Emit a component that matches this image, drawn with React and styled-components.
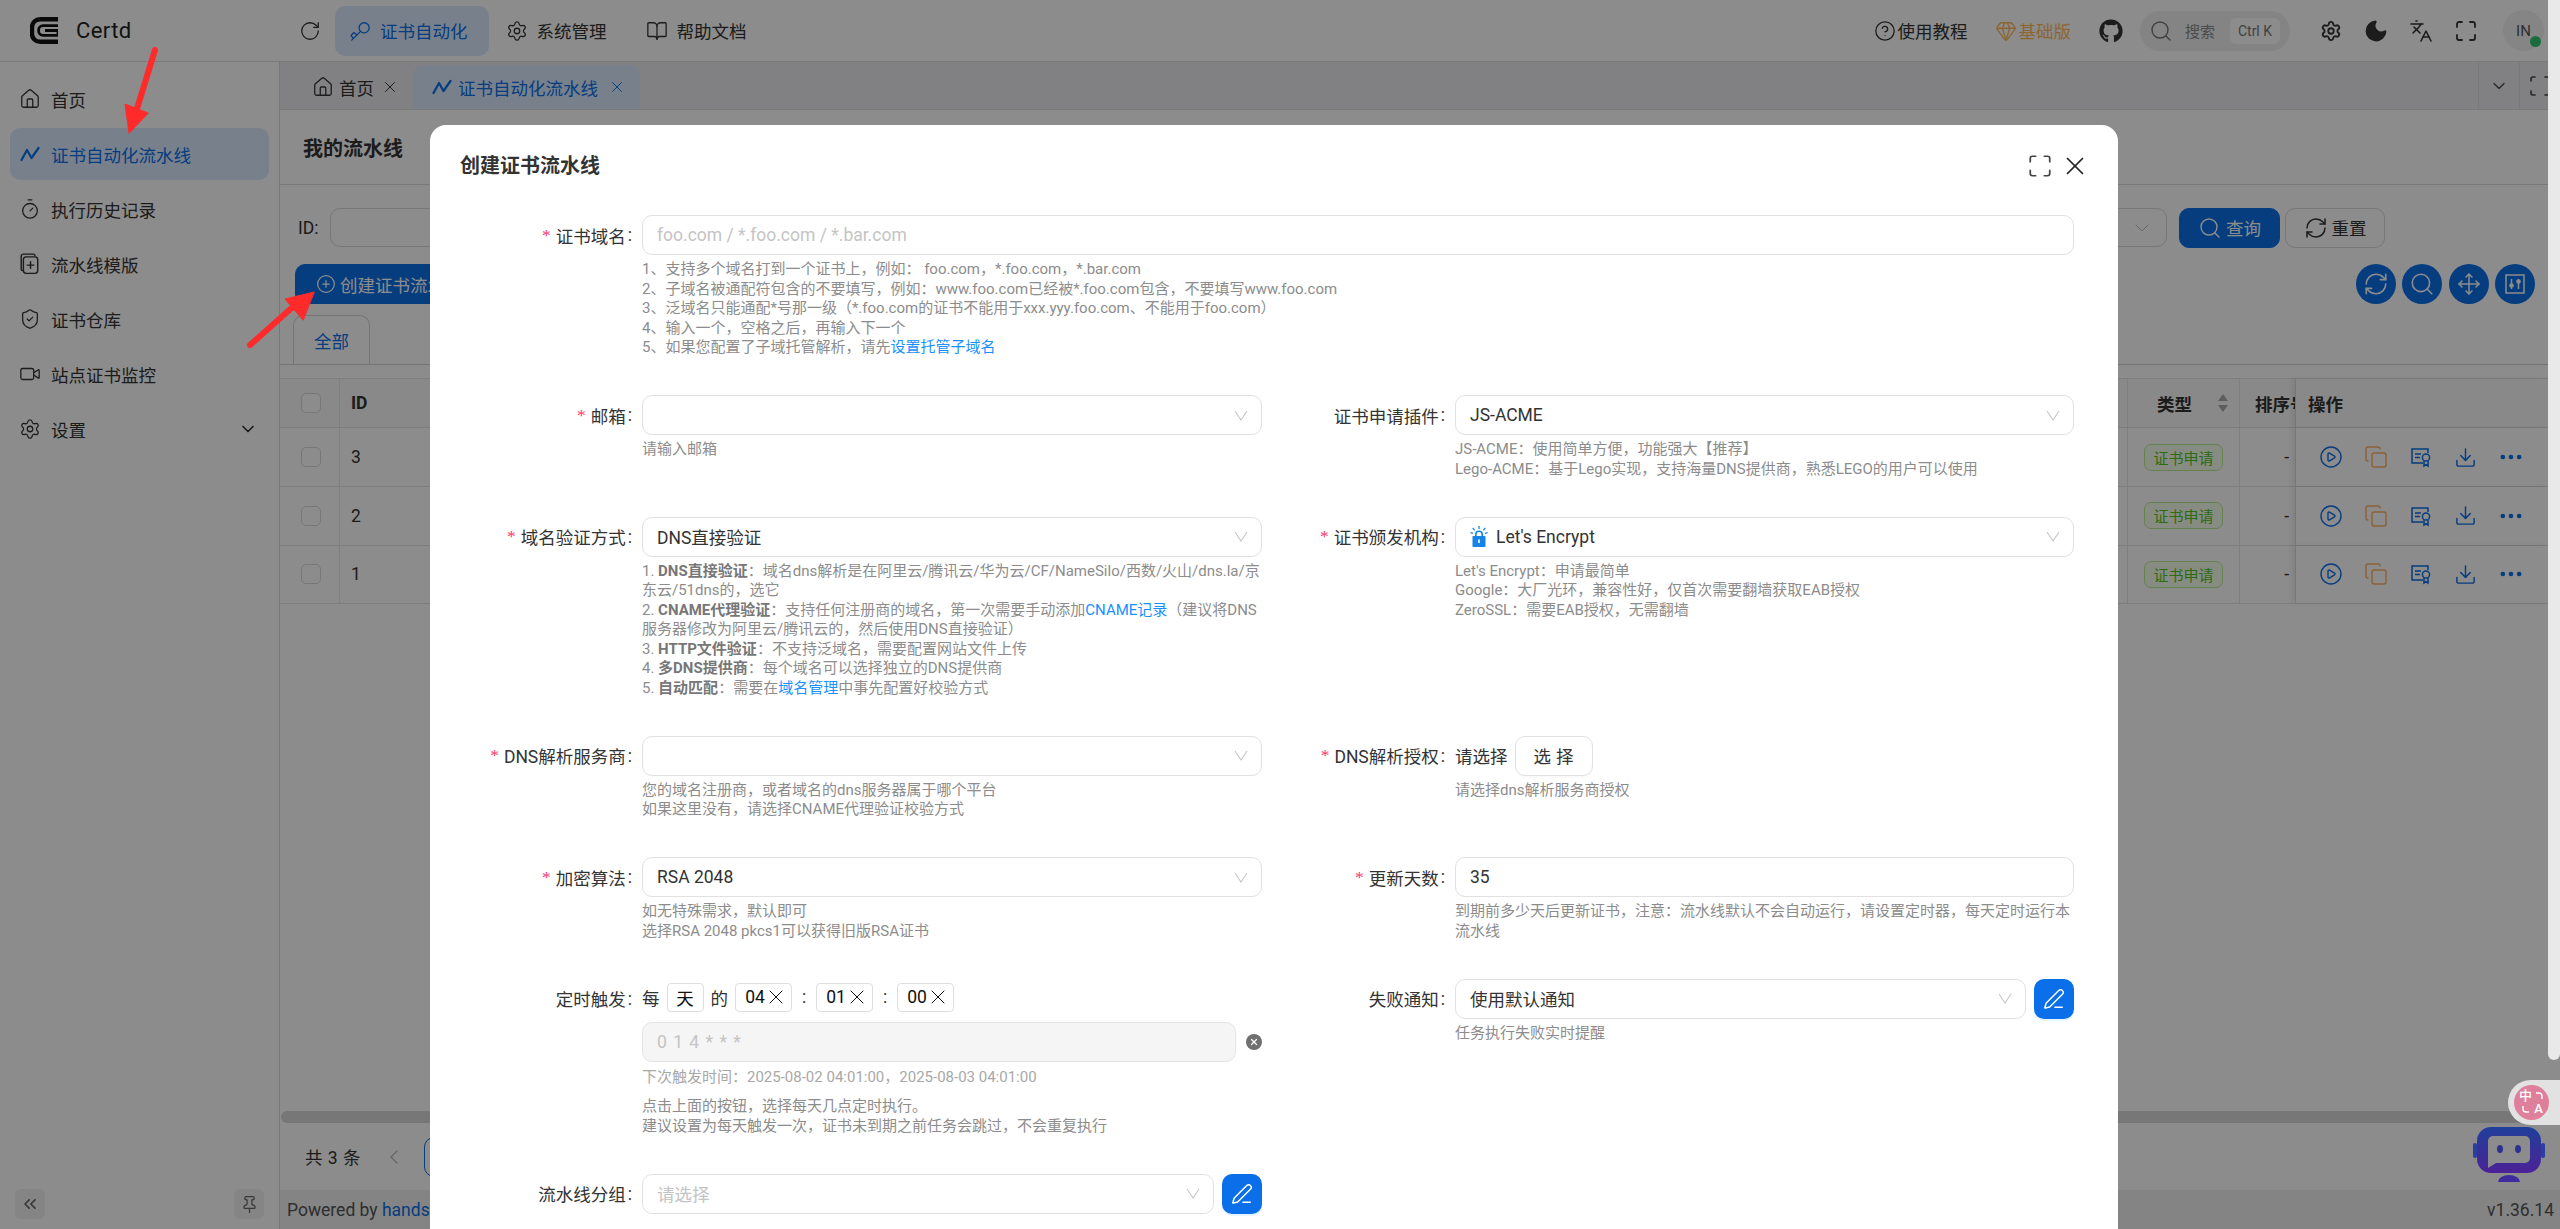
import React from "react";
import styled, { createGlobalStyle } from "styled-components";
import {
  House, Key, Settings, BookOpen, RotateCw, ShieldCheck, Video, ChevronDown, CircleHelp, Gem, Search,
  Moon, Languages, Maximize, X, CirclePlus, RefreshCw, Move, CirclePlay, Copy, Download, Ellipsis,
  PenLine, ChevronsLeft, Pin, Timer, ChevronLeft, Scan,
} from "lucide-react";
import { FaGithub } from "react-icons/fa";

const PRIMARY = "#0a6fe8";

const Global = createGlobalStyle`
  html, body { margin: 0; padding: 0; width: 2560px; height: 1229px; overflow: hidden; background: #fff; }
  body { font-family: Roboto, "Noto Sans CJK SC", sans-serif; font-size: 17.5px; color: #333; }
  * { box-sizing: border-box; }
`;

const Shell = styled.div`
  width: 2560px; height: 1229px; display: flex; flex-direction: column; overflow: hidden; position: relative; background: #fff;
`;
const TopBar = styled.header`
  height: 62px; flex: none; display: flex; align-items: center; padding-right: 16px; border-bottom: 1px solid #dcdcdc; background: #fff;
`;
const Brand = styled.div`
  width: 300px; padding-left: 30px; display: flex; align-items: center; gap: 18px; font-size: 22px; letter-spacing: .4px; color: #222;
`;
const MenuItem = styled.div`
  height: 50px; display: flex; align-items: center; gap: 10px; padding: 0 21px 0 15px; border-radius: 10px; margin-left: ${p => p.$ml || 0}px;
  color: ${p => (p.$active ? PRIMARY : "#333")}; background: ${p => (p.$active ? "#dbeaff" : "transparent")}; white-space: nowrap;
  svg { margin: 0 -1px; }
`;
const Reload = styled.div`
  width: 20px; display: flex; justify-content: center; margin-right: 15px; color: #333; svg { flex: none; }
`;
const TurnedKey = styled(Key)` transform: rotate(180deg); `;
const HeaderRight = styled.div`
  margin-left: auto; display: flex; align-items: center;
`;
const HeaderLink = styled.div`
  display: flex; align-items: center; gap: 4px; margin-left: ${p => p.$ml || 0}px; color: ${p => p.$color || "#333"}; white-space: nowrap;
  svg { margin: 0 -2px; }
`;
const SearchPill = styled.div`
  width: 150px; height: 40px; margin-left: 19px; border-radius: 20px; background: #f1f1f1; display: flex; align-items: center; padding: 0 10px 0 9px; color: #777; font-size: 15px;
`;
const SearchWord = styled.span` margin-left: 12px; color: #888; `;
const Kbd = styled.span`
  margin-left: auto; width: 50px; height: 26px; border-radius: 6px; background: #fff; font-size: 14px; display: flex; align-items: center; justify-content: center; color: #777;
`;
const HeaderIcon = styled.div`
  width: 45px; display: flex; justify-content: center; color: #333; margin-left: ${p => p.$ml || 0}px;
`;
const Avatar = styled.div`
  width: 41px; height: 41px; border-radius: 50%; background: #f2f2f2; margin-left: 15px; position: relative; display: flex; align-items: center; justify-content: center; font-size: 15px; color: #555;
`;
const OnlineDot = styled.span`
  position: absolute; right: 3px; bottom: 4px; width: 11px; height: 11px; border-radius: 50%; background: #2fc76e;
`;

const Body = styled.div` flex: 1; min-height: 0; display: flex; `;
const Sidebar = styled.aside`
  width: 280px; flex: none; border-right: 1px solid #dcdcdc; padding: 11px 10px 10px; display: flex; flex-direction: column; gap: 3px;
`;
const NavItem = styled.div`
  height: 52px; flex: none; border-radius: 10px; display: flex; align-items: center; gap: 11px; padding: 0 11px 0 10px;
  color: ${p => (p.$active ? PRIMARY : "#333")}; background: ${p => (p.$active ? "#dbeaff" : "transparent")};
  & > svg { margin: 0 -1px; }
`;
const NavTail = styled.span` margin-left: auto; display: flex; `;
const SideFoot = styled.div` margin-top: auto; padding: 0 5px; display: flex; justify-content: space-between; `;
const SquareBtn = styled.div`
  width: 30px; height: 30px; border-radius: 6px; background: #f3f3f3; display: flex; align-items: center; justify-content: center; color: #666;
`;

const Main = styled.main` flex: 1; min-width: 0; display: flex; flex-direction: column; `;
const TabBar = styled.div`
  height: 48px; flex: none; background: #ebecef; border-bottom: 1px solid #dcdcdc; display: flex; align-items: flex-end; padding-left: 23px; position: relative;
`;
const PageTab = styled.div`
  height: 44px; display: flex; align-items: center; gap: 6px; padding: 0 14px 0 ${p => (p.$active ? 19 : 10)}px; border-radius: 10px 10px 0 0; width: ${p => p.$w}px;
  background: ${p => (p.$active ? "#dbeaff" : "transparent")}; color: ${p => (p.$active ? PRIMARY : "#333")};
  & > svg { margin: 0 -1px; }
`;
const TabClose = styled.span` margin-left: auto; display: flex; `;
const TabTool = styled.div`
  width: 41px; height: 47px; border-left: 1px solid #dcdcdc; display: flex; align-items: center; justify-content: center; color: #444; flex: none;
`;
const TabTools = styled.div` margin-left: auto; display: flex; padding-right: 0; `;
const PageHead = styled.div`
  height: 75px; flex: none; display: flex; align-items: center; padding-left: 23px; font-size: 20px; font-weight: 700; color: #333; border-bottom: 1px solid #dcdcdc;
`;
const Content = styled.div` flex: 1; min-height: 0; display: flex; flex-direction: column; `;
const QueryRow = styled.div`
  height: 39px; margin-top: 23px; padding: 0 175px 0 18px; display: flex; align-items: center; flex: none;
`;
const FieldLabel = styled.span` margin-right: 12px; `;
const QueryInput = styled.div`
  flex: 1; height: 39px; border: 1px solid #d9d9d9; border-radius: 10px; display: flex; align-items: center; justify-content: flex-end; padding-right: 12px; color: #bbb;
`;
const Btn = styled.div`
  height: 40px; padding: 0 ${p => (p.$w ? 0 : 20)}px; border-radius: 10px; display: flex; align-items: center; justify-content: center; gap: 4px; margin-left: ${p => p.$ml}px; white-space: nowrap; flex: none;
  width: ${p => (p.$w ? `${p.$w}px` : "auto")};
  background: ${p => (p.$primary ? PRIMARY : "#fff")}; color: ${p => (p.$primary ? "#fff" : "#333")}; border: 1px solid ${p => (p.$primary ? PRIMARY : "#d9d9d9")};
  svg { flex: none; }
`;
const ToolRow = styled.div`
  height: 40px; margin-top: 17px; padding: 0 25px 0 15px; display: flex; justify-content: space-between; align-items: center; flex: none;
`;
const Circles = styled.div` display: flex; gap: 6.5px; `;
const Circle = styled.div`
  width: 40px; height: 40px; border-radius: 50%; background: ${PRIMARY}; color: #fff; display: flex; align-items: center; justify-content: center;
`;
const TypeTabs = styled.div`
  height: 49px; margin: 12px 12px 0 0; padding-left: 13px; border-bottom: 1px solid #d6d6d6; flex: none; display: flex; align-items: flex-end;
`;
const TypeTab = styled.div`
  width: 77px; height: 49px; border: 1px solid #d6d6d6; border-bottom: 0; border-radius: 10px 10px 0 0; display: flex; align-items: center; justify-content: center; color: ${PRIMARY};
`;
const Table = styled.div`
  margin: 13px 12px 0 0; border-top: 1px solid #e3e3e3; flex: 1; min-height: 0; display: flex; flex-direction: column;
`;
const TRow = styled.div`
  display: grid; grid-template-columns: 60px 1fr 112px 56px 252px; height: ${p => p.$h}px; flex: none; border-bottom: 1px solid #e3e3e3; background: ${p => (p.$head ? "#fafafa" : "#fff")}; font-weight: ${p => (p.$head ? 700 : 400)};
`;
const Cell = styled.div`
  border-right: 1px solid #e8e8e8; display: flex; align-items: center; padding: 0 ${p => p.$pr ?? 10}px 0 ${p => p.$pl ?? 11}px; justify-content: ${p => p.$justify || "flex-start"}; overflow: hidden; white-space: nowrap; min-width: 0;
`;
const FixedCell = styled.div`
  display: flex; align-items: center; padding-left: 12px; box-shadow: -4px 0 5px rgba(0,0,0,.08); position: relative; background: ${p => (p.$head ? "#fafafa" : "#fff")};
`;
const Check = styled.span`
  width: 20px; height: 20px; border: 1px solid #d9d9d9; border-radius: 5px; background: #fff; display: block; flex: none;
`;
const TypeTag = styled.span`
  width: 79px; height: 27px; border-radius: 7px; border: 1px solid #b7eb8f; background: #f6ffed; color: #52c41a; font-size: 15px; display: flex; align-items: center; justify-content: center; flex: none;
`;
const SortArrows = styled.span` margin-left: auto; display: flex; color: #aaa; `;
const Actions = styled.div` display: grid; grid-template-columns: repeat(5, 45px); width: 100%; justify-items: center; align-items: center; margin-left: -12px; padding-left: 12px; `;
const ActionIcon = styled.span` display: flex; color: ${p => (p.$warm ? "#ffb060" : PRIMARY)}; `;
const TableSpacer = styled.div` flex: 1; `;
const HScroll = styled.div` height: 12px; margin: 0 -12px 0 1px; border-radius: 6px; background: #d9d9d9; flex: none; `;
const Pager = styled.div`
  height: 67px; flex: none; padding-left: 25px; display: flex; align-items: center; letter-spacing: .5px; color: #333;
`;
const PagerPrev = styled.span` display: flex; margin-left: 21px; color: #bbb; `;
const PagerNum = styled.span`
  margin-left: 18px; width: 40px; height: 40px; border: 1px solid ${PRIMARY}; border-radius: 10px; display: flex; align-items: center; justify-content: center; color: ${PRIMARY}; flex: none;
`;
const Footer = styled.footer`
  height: 39px; flex: none; background: #f0f0f0; padding: 0 6px 0 7px; display: flex; align-items: center; justify-content: space-between; color: #555;
`;
const FooterLink = styled.a` color: ${PRIMARY}; `;

/* modal layer */
const Mask = styled.div`
  position: absolute; inset: 0; background: rgba(0,0,0,.45); padding: 125px 0 0 430px; overflow: hidden;
`;
const Modal = styled.section`
  width: 1688px; height: 1200px; background: #fff; border-radius: 16px;
`;
const ModalHead = styled.div`
  height: 81px; padding: 0 28px 0 30px; display: flex; align-items: center; justify-content: space-between;
`;
const ModalTitle = styled.h2` margin: 0; font-size: 20px; font-weight: 700; color: #333; line-height: 1; `;
const ModalTools = styled.div` display: flex; align-items: center; gap: 7px; color: #222; `;
const Form = styled.div`
  margin-top: 9px; padding-left: 20px; display: grid; grid-template-columns: 812px 794px; column-gap: 18px; row-gap: 37.5px; align-items: start;
`;
const Item = styled.div`
  display: grid; grid-template-columns: ${p => p.$label}px 1fr; grid-column: ${p => (p.$wide ? "1 / -1" : "auto")};
`;
const Label = styled.label`
  height: 40px; display: flex; align-items: center; justify-content: flex-end; color: #333; white-space: nowrap;
  &::after { content: ":"; margin: 0 10px 0 2px; }
`;
const Star = styled.span`
  color: #f4386c; margin-right: 5px; font-family: "Liberation Serif", serif;
`;
const Control = styled.div` min-width: 0; `;
const Combo = styled.div` display: flex; gap: 8px; `;
const Field = styled.div`
  flex: 1; min-width: 0; height: 40px; border: 1px solid ${p => (p.$disabled ? "#e4e4e4" : "#e1e1e1")}; border-radius: 10px; padding: 0 14px;
  background: ${p => (p.$disabled ? "#f5f5f5" : "#fff")}; display: flex; align-items: center; justify-content: space-between; color: ${p => (p.$muted ? "#c4c4c4" : "#333")}; white-space: nowrap; word-spacing: ${p => (p.$disabled ? "2px" : 0)};
`;
const FieldText = styled.span` display: flex; align-items: center; gap: 8px; `;
const Chevron = styled.svg` display: block; flex: none; margin-right: -1px; color: #c6c6c6; `;
const EditBtn = styled.div`
  width: 40px; height: 40px; flex: none; border-radius: 10px; background: ${PRIMARY}; color: #fff; display: flex; align-items: center; justify-content: center; box-shadow: 0 2px 0 rgba(5,145,255,.1);
`;
const Help = styled.div`
  margin-top: ${p => p.$mt ?? 5}px; font-size: 15px; line-height: 19.5px; color: ${p => p.$color || "#8c8c8c"};
  strong { color: #777; font-weight: 700; }
  a { color: #1890ff; text-decoration: none; }
`;
const Line = styled.div``;
const PickRow = styled.div` height: 40px; display: flex; align-items: center; gap: 7px; `;
const PickBtn = styled.div`
  width: 78px; height: 40px; border: 1px solid #e1e1e1; border-radius: 10px; display: flex; align-items: center; justify-content: center; letter-spacing: 5px; padding-left: 5px; box-shadow: 0 2px 0 rgba(0,0,0,.02);
`;
const CronRow = styled.div` height: 29px; margin-top: 4px; display: flex; align-items: center; gap: 7px; white-space: nowrap; `;
const CronTag = styled.span`
  height: 29px; width: ${p => p.$w}px; border: 1px solid #dedede; border-radius: 4px; display: flex; align-items: center; justify-content: center; gap: 2px; color: #111;
`;
const CronX = styled(X)` margin: 0 -6px 0 -3px; flex: none; `;
const CronColon = styled.span` width: 12px; text-align: center; margin: 0 -1px; `;
const CronField = styled.div` margin-top: 10px; display: flex; align-items: center; `;
const ClearDot = styled.span`
  width: 16px; height: 16px; margin-left: 10px; border-radius: 50%; background: #707070; color: #fff; display: flex; align-items: center; justify-content: center; flex: none;
`;

const ScrollThumb = styled.div`
  position: absolute; right: 0; top: 0; width: 12px; height: 1060px; background: #e9e9e9; border-radius: 0 0 6px 6px;
`;
const Translator = styled.div`
  position: absolute; right: 0; top: 1080px; width: 52px; height: 45px; background: #e2e2e2; border-radius: 23px 0 0 23px; display: flex; align-items: center; padding-left: 6px;
`;
const TransDisc = styled.div`
  width: 35px; height: 35px; border-radius: 50%; background: #de7f9c; color: #fff; display: grid; grid-template-columns: 1fr 1fr; grid-template-rows: 1fr 1fr; font-size: 13px; line-height: 1; padding: 4px 4px 5px 5px; font-weight: 500;
`;
const TransWord = styled.span` display: flex; align-items: center; justify-content: center; grid-column: ${p => p.$c}; grid-row: ${p => p.$r}; `;
const TransArc = styled.svg` display: block; grid-column: ${p => p.$c}; grid-row: ${p => p.$r}; place-self: center; `;
const Robot = styled.svg` position: absolute; left: 2472px; top: 1126px; `;
const Arrows = styled.svg` position: absolute; left: 0; top: 0; pointer-events: none; `;
const Logo = styled.svg` flex: none; `;

const ico = { size: 22, strokeWidth: 1.4 };

const Zigzag = ({ size = 22 }) => (
  <svg width={size} height={size} viewBox="0 0 22 22" fill="none" stroke="currentColor" strokeWidth="2.2" strokeLinejoin="round" strokeLinecap="round">
    <path d="M2.5 17 L8 7 L12.5 15 L19.5 5" />
  </svg>
);
const TemplateIcon = () => (
  <svg width="22" height="22" viewBox="0 0 20 20" fill="none" stroke="currentColor" strokeWidth="1.3" strokeLinecap="round" strokeLinejoin="round">
    <rect x="4" y="3.5" width="13" height="15" rx="2.5" />
    <path d="M4 16 H3 a1 1 0 0 1 -1 -1 V3 a2 2 0 0 1 2 -2 H13 a1.5 1.5 0 0 1 1.5 1.5 M10.5 8 V14 M7.5 11 H13.5" />
  </svg>
);
const CertIcon = () => (
  <svg width="22" height="22" viewBox="0 0 22 22" fill="none" stroke="currentColor" strokeWidth="1.5">
    <path d="M13 17 H2 V3 H18 V7" />
    <path d="M5 8 H11 M5 11.5 H10" />
    <circle cx="16" cy="11.5" r="3.6" />
    <path d="M14 15 V20 L16 18.6 L18 20 V15" />
  </svg>
);
const TuneBox = () => (
  <svg width="24" height="24" viewBox="0 0 24 24" fill="none" stroke="currentColor" strokeWidth="1.5">
    <rect x="3" y="3" width="18" height="18" />
    <path d="M8.5 7 V17 M15.5 7 V17" />
    <circle cx="8.5" cy="13.5" r="1.6" fill="currentColor" />
    <circle cx="15.5" cy="9.5" r="1.6" fill="currentColor" />
  </svg>
);
const LeIcon = () => (
  <svg width="18" height="21" viewBox="0 0 18 21" fill="none">
    <path d="M9 0 V3 M2.8 1.8 L4.6 4.4 M15.2 1.8 L13.4 4.4 M0.5 6.6 L3 7.4 M17.5 6.6 L15 7.4" stroke="#1584e8" strokeWidth="1.3" />
    <path d="M5.8 10 V8.4 a3.2 3.2 0 0 1 6.4 0 V10" stroke="#1584e8" strokeWidth="1.6" />
    <rect x="2.5" y="10" width="13" height="11" rx="0.8" fill="#1584e8" />
    <rect x="8.2" y="13.5" width="1.6" height="3.5" fill="#fff" />
  </svg>
);
const SortIcon = () => (
  <svg width="12" height="22" viewBox="0 0 12 22" fill="currentColor">
    <path d="M6 2 L11 9 H1 Z M6 20 L1 13 H11 Z" />
  </svg>
);

const Req = () => <Star>*</Star>;
const Caret = () => (
  <Chevron width="14" height="11" viewBox="0 0 14 11" fill="none" stroke="currentColor" strokeWidth="1.1">
    <path d="M1 1 L7 10 L13 1" />
  </Chevron>
);
const Edit = () => <EditBtn><PenLine size={22} strokeWidth={1.6} /></EditBtn>;

const NAV = [
  [<House {...ico} key="i" />, "首页"],
  [<Zigzag key="i" />, "证书自动化流水线", true],
  [<Timer {...ico} key="i" />, "执行历史记录"],
  [<TemplateIcon key="i" />, "流水线模版"],
  [<ShieldCheck {...ico} key="i" />, "证书仓库"],
  [<Video {...ico} key="i" />, "站点证书监控"],
];

const ROWS = ["3", "2", "1"];

export default function App() {
  return (
    <Shell>
      <Global />
      <TopBar>
        <Brand>
          <Logo width="28" height="27" viewBox="0 0 28 27" fill="none" stroke="#111" strokeLinejoin="round">
            <path d="M28 2.2 H10 a8 8 0 0 0 -8 8 V16.8 a8 8 0 0 0 8 8 H28" strokeWidth="4.4" />
            <path d="M28 8.6 H13 a4.4 4.4 0 0 0 -4.4 4.4 V14 a4.4 4.4 0 0 0 4.4 4.4 H28 V13.5 H15" strokeWidth="2.8" />
          </Logo>
          Certd
        </Brand>
        <Reload><RotateCw size={22} strokeWidth={1.4} /></Reload>
        <MenuItem $active><TurnedKey {...ico} />证书自动化</MenuItem>
        <MenuItem $ml={3}><Settings {...ico} />系统管理</MenuItem>
        <MenuItem $ml={4}><BookOpen {...ico} />帮助文档</MenuItem>
        <HeaderRight>
          <HeaderLink><CircleHelp {...ico} />使用教程</HeaderLink>
          <HeaderLink $ml={29} $color="#ffb95c"><Gem size={22} strokeWidth={1.5} />基础版</HeaderLink>
          <HeaderLink $ml={30}><FaGithub size={24} /></HeaderLink>
          <SearchPill>
            <Search size={24} strokeWidth={1.4} />
            <SearchWord>搜索</SearchWord>
            <Kbd>Ctrl K</Kbd>
          </SearchPill>
          <HeaderIcon $ml={18}><Settings size={22} strokeWidth={2} /></HeaderIcon>
          <HeaderIcon><Moon size={26} fill="currentColor" strokeWidth={1.2} /></HeaderIcon>
          <HeaderIcon><Languages size={24} strokeWidth={1.6} /></HeaderIcon>
          <HeaderIcon><Maximize size={24} strokeWidth={1.8} /></HeaderIcon>
          <Avatar>IN<OnlineDot /></Avatar>
        </HeaderRight>
      </TopBar>
      <Body>
        <Sidebar>
          {NAV.map(([icon, text, active]) => (
            <NavItem key={text} $active={active}>{icon}{text}</NavItem>
          ))}
          <NavItem>
            <Settings {...ico} />设置
            <NavTail><ChevronDown size={20} strokeWidth={2} /></NavTail>
          </NavItem>
          <SideFoot>
            <SquareBtn><ChevronsLeft size={20} /></SquareBtn>
            <SquareBtn><Pin size={19} strokeWidth={1.6} /></SquareBtn>
          </SideFoot>
        </Sidebar>
        <Main>
          <TabBar>
            <PageTab $w={110}><House {...ico} />首页<TabClose><X size={18} strokeWidth={1.3} /></TabClose></PageTab>
            <PageTab $active $w={227}><Zigzag />证书自动化流水线<TabClose><X size={18} strokeWidth={1.3} /></TabClose></PageTab>
            <TabTools>
              <TabTool><ChevronDown size={20} strokeWidth={1.5} /></TabTool>
              <TabTool><Scan size={24} strokeWidth={1.6} /></TabTool>
            </TabTools>
          </TabBar>
          <PageHead>我的流水线</PageHead>
          <Content>
            <QueryRow>
              <FieldLabel>ID:</FieldLabel>
              <QueryInput><ChevronDown size={24} strokeWidth={1} /></QueryInput>
              <Btn $primary $ml={12} $w={101}><Search size={24} strokeWidth={1.4} />查询</Btn>
              <Btn $ml={5} $w={100}><RefreshCw size={24} strokeWidth={1.5} />重置</Btn>
            </QueryRow>
            <ToolRow>
              <Btn $primary><CirclePlus size={20} strokeWidth={1.5} />创建证书流水线</Btn>
              <Circles>
                <Circle><RefreshCw size={26} strokeWidth={1.5} /></Circle>
                <Circle><Search size={26} strokeWidth={1.5} /></Circle>
                <Circle><Move size={24} strokeWidth={1.5} /></Circle>
                <Circle><TuneBox /></Circle>
              </Circles>
            </ToolRow>
            <TypeTabs><TypeTab>全部</TypeTab></TypeTabs>
            <Table>
              <TRow $head $h={49}>
                <Cell $pl={21}><Check /></Cell>
                <Cell>ID</Cell>
                <Cell $pl={29}>类型<SortArrows><SortIcon /></SortArrows></Cell>
                <Cell $pl={15} $pr={0}>排序号</Cell>
                <FixedCell $head>操作</FixedCell>
              </TRow>
              {ROWS.map((id, i) => (
                <TRow key={id} $h={i === 0 ? 59 : 58.5}>
                  <Cell $pl={21}><Check /></Cell>
                  <Cell>{id}</Cell>
                  <Cell $pl={16} $pr={0}><TypeTag>证书申请</TypeTag></Cell>
                  <Cell $justify="flex-end" $pr={6}>-</Cell>
                  <FixedCell>
                    <Actions>
                      <ActionIcon><CirclePlay size={24} strokeWidth={1.4} /></ActionIcon>
                      <ActionIcon $warm><Copy size={24} strokeWidth={1.4} /></ActionIcon>
                      <ActionIcon><CertIcon /></ActionIcon>
                      <ActionIcon><Download size={23} strokeWidth={1.5} /></ActionIcon>
                      <ActionIcon><Ellipsis size={28} strokeWidth={2} /></ActionIcon>
                    </Actions>
                  </FixedCell>
                </TRow>
              ))}
              <TableSpacer />
              <HScroll />
            </Table>
            <Pager>
              共 3 条
              <PagerPrev><ChevronLeft size={24} strokeWidth={1.4} /></PagerPrev>
              <PagerNum>1</PagerNum>
            </Pager>
          </Content>
          <Footer>
            <span>Powered by <FooterLink>handsfree.work</FooterLink></span>
            <span>v1.36.14</span>
          </Footer>
        </Main>
      </Body>

      <Mask>
        <Modal>
          <ModalHead>
            <ModalTitle>创建证书流水线</ModalTitle>
            <ModalTools>
              <Maximize size={26} strokeWidth={1.6} color="#444" />
              <X size={30} strokeWidth={1.4} />
            </ModalTools>
          </ModalHead>
          <Form>
            <Item $wide $label={192}>
              <Label><Req />证书域名</Label>
              <Control>
                <Field $muted>foo.com / *.foo.com / *.bar.com</Field>
                <Help>
                  <Line>1、支持多个域名打到一个证书上，例如： foo.com，*.foo.com，*.bar.com</Line>
                  <Line>2、子域名被通配符包含的不要填写，例如：www.foo.com已经被*.foo.com包含，不要填写www.foo.com</Line>
                  <Line>3、泛域名只能通配*号那一级（*.foo.com的证书不能用于xxx.yyy.foo.com、不能用于foo.com）</Line>
                  <Line>4、输入一个，空格之后，再输入下一个</Line>
                  <Line>5、如果您配置了子域托管解析，请先<a>设置托管子域名</a></Line>
                </Help>
              </Control>
            </Item>

            <Item $label={192}>
              <Label><Req />邮箱</Label>
              <Control>
                <Field><span /><Caret /></Field>
                <Help>请输入邮箱</Help>
              </Control>
            </Item>
            <Item $label={175}>
              <Label>证书申请插件</Label>
              <Control>
                <Field>JS-ACME<Caret /></Field>
                <Help>
                  <Line>JS-ACME：使用简单方便，功能强大【推荐】</Line>
                  <Line>Lego-ACME：基于Lego实现，支持海量DNS提供商，熟悉LEGO的用户可以使用</Line>
                </Help>
              </Control>
            </Item>

            <Item $label={192}>
              <Label><Req />域名验证方式</Label>
              <Control>
                <Field>DNS直接验证<Caret /></Field>
                <Help>
                  <Line>1. <strong>DNS直接验证</strong>：域名dns解析是在阿里云/腾讯云/华为云/CF/NameSilo/西数/火山/dns.la/京东云/51dns的，选它</Line>
                  <Line>2. <strong>CNAME代理验证</strong>：支持任何注册商的域名，第一次需要手动添加<a>CNAME记录</a>（建议将DNS服务器修改为阿里云/腾讯云的，然后使用DNS直接验证）</Line>
                  <Line>3. <strong>HTTP文件验证</strong>：不支持泛域名，需要配置网站文件上传</Line>
                  <Line>4. <strong>多DNS提供商</strong>：每个域名可以选择独立的DNS提供商</Line>
                  <Line>5. <strong>自动匹配</strong>：需要在<a>域名管理</a>中事先配置好校验方式</Line>
                </Help>
              </Control>
            </Item>
            <Item $label={175}>
              <Label><Req />证书颁发机构</Label>
              <Control>
                <Field><FieldText><LeIcon />Let's Encrypt</FieldText><Caret /></Field>
                <Help>
                  <Line>Let's Encrypt：申请最简单</Line>
                  <Line>Google：大厂光环，兼容性好，仅首次需要翻墙获取EAB授权</Line>
                  <Line>ZeroSSL：需要EAB授权，无需翻墙</Line>
                </Help>
              </Control>
            </Item>

            <Item $label={192}>
              <Label><Req />DNS解析服务商</Label>
              <Control>
                <Field><span /><Caret /></Field>
                <Help>
                  <Line>您的域名注册商，或者域名的dns服务器属于哪个平台</Line>
                  <Line>如果这里没有，请选择CNAME代理验证校验方式</Line>
                </Help>
              </Control>
            </Item>
            <Item $label={175}>
              <Label><Req />DNS解析授权</Label>
              <Control>
                <PickRow>请选择<PickBtn>选择</PickBtn></PickRow>
                <Help>请选择dns解析服务商授权</Help>
              </Control>
            </Item>

            <Item $label={192}>
              <Label><Req />加密算法</Label>
              <Control>
                <Field>RSA 2048<Caret /></Field>
                <Help>
                  <Line>如无特殊需求，默认即可</Line>
                  <Line>选择RSA 2048 pkcs1可以获得旧版RSA证书</Line>
                </Help>
              </Control>
            </Item>
            <Item $label={175}>
              <Label><Req />更新天数</Label>
              <Control>
                <Field>35</Field>
                <Help>到期前多少天后更新证书，注意：流水线默认不会自动运行，请设置定时器，每天定时运行本流水线</Help>
              </Control>
            </Item>

            <Item $label={192}>
              <Label>定时触发</Label>
              <Control>
                <CronRow>
                  每
                  <CronTag $w={37}>天</CronTag>
                  的
                  <CronTag $w={57}>04<CronX size={24} strokeWidth={1} /></CronTag>
                  <CronColon>:</CronColon>
                  <CronTag $w={57}>01<CronX size={24} strokeWidth={1} /></CronTag>
                  <CronColon>:</CronColon>
                  <CronTag $w={57}>00<CronX size={24} strokeWidth={1} /></CronTag>
                </CronRow>
                <CronField>
                  <Field $disabled $muted>0 1 4 * * *</Field>
                  <ClearDot><X size={10} strokeWidth={3} /></ClearDot>
                </CronField>
                <Help $mt={6} $color="#a8a8a8">下次触发时间：2025-08-02 04:01:00，2025-08-03 04:01:00</Help>
                <Help $mt={10}>
                  <Line>点击上面的按钮，选择每天几点定时执行。</Line>
                  <Line>建议设置为每天触发一次，证书未到期之前任务会跳过，不会重复执行</Line>
                </Help>
              </Control>
            </Item>
            <Item $label={175}>
              <Label>失败通知</Label>
              <Control>
                <Combo>
                  <Field>使用默认通知<Caret /></Field>
                  <Edit />
                </Combo>
                <Help>任务执行失败实时提醒</Help>
              </Control>
            </Item>

            <Item $label={192}>
              <Label>流水线分组</Label>
              <Control>
                <Combo>
                  <Field $muted>请选择<Caret /></Field>
                  <Edit />
                </Combo>
              </Control>
            </Item>
          </Form>
        </Modal>
      </Mask>

      <ScrollThumb />
      <Translator>
        <TransDisc>
          <TransWord $c={1} $r={1}>中</TransWord>
          <TransArc $c={2} $r={1} width="10" height="10" viewBox="0 0 10 10" fill="none" stroke="#fff" strokeWidth="1.4"><path d="M2 2 H5 a3 3 0 0 1 3 3 V8" /></TransArc>
          <TransArc $c={1} $r={2} width="10" height="10" viewBox="0 0 10 10" fill="none" stroke="#fff" strokeWidth="1.4"><path d="M2 2 V5 a3 3 0 0 0 3 3 H8" /></TransArc>
          <TransWord $c={2} $r={2}>A</TransWord>
        </TransDisc>
      </Translator>
      <Robot width="74" height="58" viewBox="0 0 74 58">
        <defs>
          <linearGradient id="botFill" x1="0" y1="0" x2="0" y2="1">
            <stop offset="0" stopColor="#1f3f9b" />
            <stop offset="1" stopColor="#4c2296" />
          </linearGradient>
        </defs>
        <rect x="1" y="17" width="4" height="15" rx="2" fill="#2b3fa0" />
        <rect x="69" y="17" width="4" height="15" rx="2" fill="#2b3fa0" />
        <path fillRule="evenodd" fill="url(#botFill)" d="M19 1 H55 a14 14 0 0 1 14 14 V33 a14 14 0 0 1 -14 14 H19 a14 14 0 0 1 -14 -14 V15 a14 14 0 0 1 14 -14 Z M21 10 a5 5 0 0 0 -5 5 V42 L24 37 H53 a5 5 0 0 0 5 -5 V15 a5 5 0 0 0 -5 -5 Z" />
        <ellipse cx="28" cy="23" rx="3" ry="4" fill="#2d3190" />
        <ellipse cx="46" cy="23" rx="3" ry="4" fill="#2d3190" />
        <path d="M26 56 a11 7 0 0 1 22 0 Z" fill="#3f2b9b" />
      </Robot>
      <Arrows width="2560" height="1229" viewBox="0 0 2560 1229">
        <g fill="#ff2a2a" stroke="#ff2a2a" strokeLinecap="round" strokeLinejoin="round">
          <path d="M155 50 L136 112" strokeWidth="6" />
          <path d="M129 133 L125 104 L148 113 Z" strokeWidth="1" />
          <path d="M250 345 L296 304" strokeWidth="6" />
          <path d="M314 292 L285 299 L303 320 Z" strokeWidth="1" />
        </g>
      </Arrows>
    </Shell>
  );
}
